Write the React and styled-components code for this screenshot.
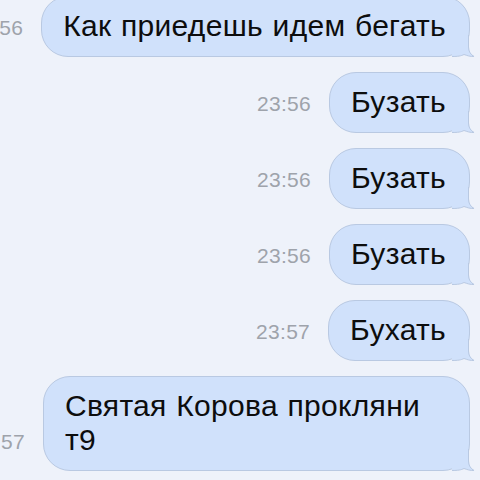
import React from "react";
import styled, { createGlobalStyle } from "styled-components";

const Global = createGlobalStyle`
  html, body { margin: 0; padding: 0; background: #eef2fa; }
  body { width: 480px; height: 480px; overflow: hidden; }
`;

const Screen = styled.div`
  width: 480px;
  height: 480px;
  overflow: hidden;
  background: #eef2fa;
  font-family: "Liberation Sans", Arial, sans-serif;
`;

const Thread = styled.div`
  display: flex;
  flex-direction: column;
  gap: 15px;
  margin-top: -4px;
  padding-right: 10px;
`;

const Row = styled.div`
  display: flex;
  justify-content: flex-end;
  align-items: flex-end;
  gap: 18px;
`;

const Time = styled.span`
  flex-shrink: 0;
  white-space: nowrap;
  font-size: 21px;
  line-height: 21px;
  letter-spacing: 0.3px;
  color: #9ea3ab;
  margin-bottom: 19px;
`;

const Bubble = styled.div`
  position: relative;
  flex-shrink: 0;
  box-sizing: border-box;
  width: ${(p) => (p.$full ? "427px" : "auto")};
  padding: 12px 23px 13px 21px;
  font-size: 30px;
  line-height: 34px;
  letter-spacing: 0.3px;
  word-spacing: 1px;
  white-space: pre;
  color: #0d0d0d;
  background: #d0e1fb;
  border: 1px solid #b9c9e2;
  border-radius: 27px;
`;

const Tail = styled.svg`
  position: absolute;
  right: -6px;
  bottom: -1px;
  width: 23px;
  height: 22px;
  overflow: visible;
`;

function BubbleTail() {
  return (
    <Tail viewBox="0 0 23 22">
      <path
        d="M0 0 L17 0 L17 12 C17 16.5 19 19.5 22.5 21.5 C18.5 21.8 15 20.5 12 19.5 C9 21 6 21.5 0 21.5 Z"
        fill="#d0e1fb"
      />
      <path
        d="M16.5 0 L16.5 12 C16.5 16.5 18.5 19.5 22 21.5 C18.5 21.8 15 20.5 12 19.5 C9 21 6 21.5 0 21.5"
        fill="none"
        stroke="#b9c9e2"
        strokeWidth="1"
      />
    </Tail>
  );
}

const messages = [
  { time: "23:56", text: "Как приедешь идем бегать" },
  { time: "23:56", text: "Бузать" },
  { time: "23:56", text: "Бузать" },
  { time: "23:56", text: "Бузать" },
  { time: "23:57", text: "Бухать" },
  { time: "23:57", text: "Святая Корова прокляни\nт9", full: true },
];

export default function App() {
  return (
    <>
      <Global />
      <Screen>
        <Thread>
          {messages.map((m, i) => (
            <Row key={i}>
              <Time>{m.time}</Time>
              <Bubble $full={m.full}>
                {m.text}
                <BubbleTail />
              </Bubble>
            </Row>
          ))}
        </Thread>
      </Screen>
    </>
  );
}
